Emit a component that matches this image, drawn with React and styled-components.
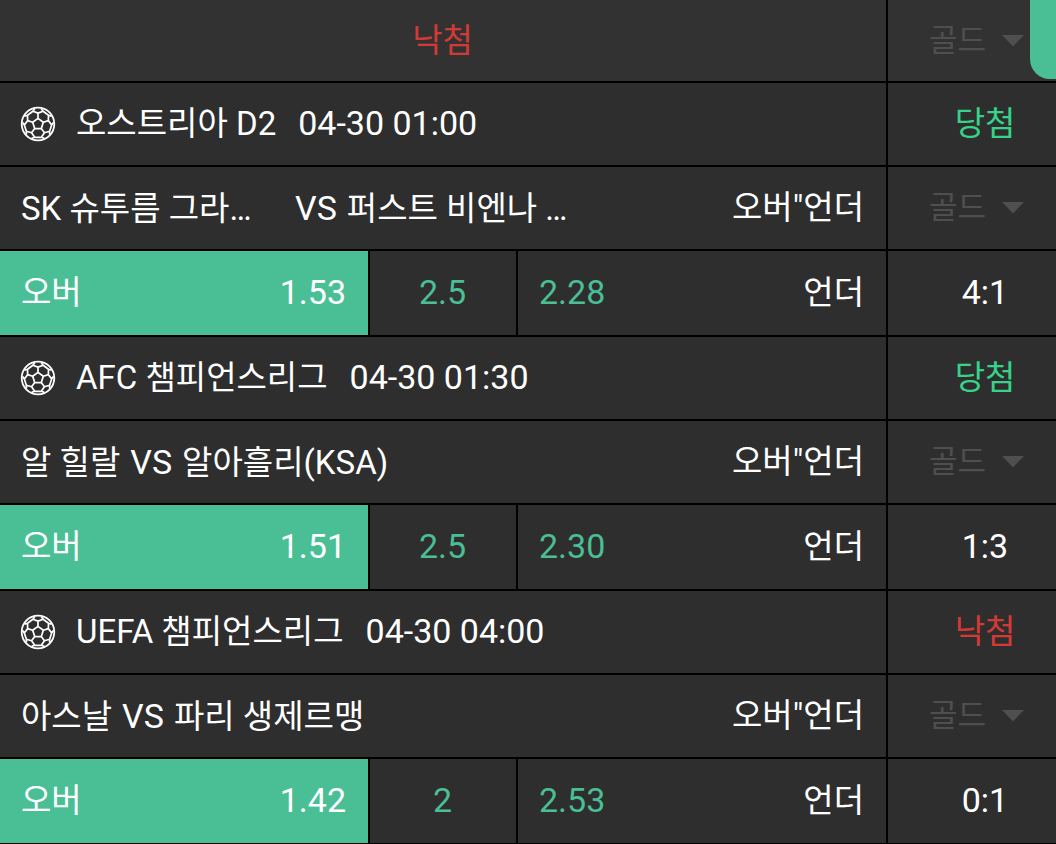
import React from "react";
import styled, { createGlobalStyle } from "styled-components";

const GlobalStyle = createGlobalStyle`
  * {
    box-sizing: border-box;
  }
  body {
    margin: 0;
    background: #000;
    color: #fff;
    font-family: Roboto, "Noto Sans CJK KR", sans-serif;
    font-size: 33px;
    line-height: 48px;
  }
`;

const colors = {
  panel: "#2e2e2e",
  header: "#323232",
  accent: "#4abf96",
  win: "#35d488",
  lose: "#d33a35",
  muted: "#4f4f4f",
};

const Slip = styled.main`
  display: flex;
  flex-direction: column;
  gap: 2px;
`;

const Match = styled.section`
  display: flex;
  flex-direction: column;
  gap: 2px;
`;

const Row = styled.div`
  display: grid;
  grid-template-columns: minmax(0, 1fr) 168px;
  gap: 2px;
  min-height: ${(p) => p.$height || 82}px;
`;

const Cell = styled.div`
  display: flex;
  align-items: center;
  justify-content: ${(p) => (p.$center ? "center" : "flex-start")};
  padding: 0 22px 0 21px;
  background: ${(p) => (p.$header ? colors.header : colors.panel)};
  white-space: nowrap;
`;

const SideCell = styled(Cell)`
  justify-content: center;
  padding: 0 0 0 26px;
`;

const PickerCell = styled(Cell)`
  gap: 15px;
  padding: 0 0 0 41px;
`;

const Result = styled.strong`
  font-weight: 400;
  color: ${(p) => (p.$won ? colors.win : colors.lose)};
`;

const Picker = styled.select`
  appearance: none;
  border: 0;
  padding: 0;
  margin: 0;
  background: transparent;
  color: ${colors.muted};
  font: inherit;
  font-size: 31px;
  opacity: 1;
`;

const League = styled.h2`
  margin: 0 22px 0 20px;
  font-size: inherit;
  font-weight: 400;
`;

const Numeric = styled.span`
  padding-bottom: 2px;
  font-size: 34px;
  color: ${(p) => (p.$accent ? colors.accent : "inherit")};
`;

const Teams = styled.div`
  display: flex;
  flex: 1;
  align-items: baseline;
  gap: 10px;
`;

const Team = styled.span`
  min-width: ${(p) => (p.$wide ? 264 : 0)}px;
`;

const Versus = styled.span`
  font-size: 34px;
`;

const Odds = styled.div`
  display: grid;
  grid-template-columns: minmax(0, 1fr) 146px minmax(0, 1fr);
  gap: 2px;
`;

const Pick = styled.button`
  display: flex;
  align-items: center;
  justify-content: space-between;
  padding: 0 22px 0 21px;
  border: 0;
  font: inherit;
  color: #fff;
  background: ${(p) => (p.$selected ? colors.accent : colors.panel)};
`;

const DrawerHandle = styled.button`
  position: fixed;
  top: 0;
  right: 0;
  width: 26px;
  height: 79px;
  padding: 0;
  border: 0;
  border-radius: 0 0 0 20px;
  background: ${colors.accent};
`;

// Edges of a football seen face-on to one of its pentagons.
const at = (radius, degrees) => {
  const a = ((degrees - 90) * Math.PI) / 180;
  return `${(18 + 16 * radius * Math.cos(a)).toFixed(2)} ${(18 + 16 * radius * Math.sin(a)).toFixed(2)}`;
};
const seams = [0, 72, 144, 216, 288]
  .map(
    (d) =>
      `M${at(0.35, d - 72)}L${at(0.35, d)}L${at(0.68, d)}` +
      `M${at(0.98, d - 12)}L${at(0.857, d - 22)}L${at(0.68, d)}L${at(0.857, d + 22)}L${at(0.98, d + 12)}` +
      `M${at(0.857, d + 22)}L${at(0.857, d + 50)}`
  )
  .join("");

const BallIcon = () => (
  <svg width="36" height="36" viewBox="0 0 36 36" fill="none" stroke="#fff" strokeLinejoin="round" aria-hidden="true">
    <circle cx="18" cy="18" r="16.3" strokeWidth="1.8" />
    <path d={seams} strokeWidth="1.7" />
  </svg>
);

const BallCell = styled(Cell)`
  padding-left: 20px;
`;

const GradePicker = ({ label, header }) => (
  <PickerCell $header={header}>
    <Picker aria-label={label} disabled defaultValue="gold">
      <option value="gold">골드</option>
    </Picker>
    <svg width="22" height="12" viewBox="0 0 22 12" aria-hidden="true">
      <path d="M0 0H22L11 11.5Z" fill={colors.muted} />
    </svg>
  </PickerCell>
);

const ResultText = ({ won }) => <Result $won={won}>{won ? "당첨" : "낙첨"}</Result>;

const matches = [
  { league: "오스트리아 D2", time: "04-30 01:00", home: "SK 슈투름 그라…", away: "퍼스트 비엔나 …", wide: true, won: true, over: "1.53", line: "2.5", under: "2.28", score: "4:1" },
  { league: "AFC 챔피언스리그", time: "04-30 01:30", home: "알 힐랄", away: "알아흘리(KSA)", won: true, over: "1.51", line: "2.5", under: "2.30", score: "1:3" },
  { league: "UEFA 챔피언스리그", time: "04-30 04:00", home: "아스날", away: "파리 생제르맹", won: false, over: "1.42", line: "2", under: "2.53", score: "0:1" },
];

export default function App() {
  return (
    <>
      <GlobalStyle />
      <Slip>
        <Row $height={81}>
          <Cell $center $header>
            <ResultText won={false} />
          </Cell>
          <GradePicker header label="등급" />
        </Row>
        {matches.map((m) => (
          <Match key={m.league}>
            <Row>
              <BallCell>
                <BallIcon />
                <League>{m.league}</League>
                <Numeric as="time">{m.time}</Numeric>
              </BallCell>
              <SideCell>
                <ResultText won={m.won} />
              </SideCell>
            </Row>
            <Row>
              <Cell>
                <Teams>
                  <Team $wide={m.wide}>{m.home}</Team>
                  <Versus>VS</Versus>
                  <Team>{m.away}</Team>
                </Teams>
                <span>오버"언더</span>
              </Cell>
              <GradePicker label={`${m.league} 등급`} />
            </Row>
            <Row $height={84}>
              <Odds>
                <Pick type="button" $selected aria-pressed="true">
                  <span>오버</span>
                  <Numeric>{m.over}</Numeric>
                </Pick>
                <Cell $center>
                  <Numeric $accent>{m.line}</Numeric>
                </Cell>
                <Pick type="button" aria-pressed="false">
                  <Numeric $accent>{m.under}</Numeric>
                  <span>언더</span>
                </Pick>
              </Odds>
              <SideCell>
                <Numeric>{m.score}</Numeric>
              </SideCell>
            </Row>
          </Match>
        ))}
      </Slip>
      <DrawerHandle type="button" aria-label="메뉴 열기" />
    </>
  );
}
